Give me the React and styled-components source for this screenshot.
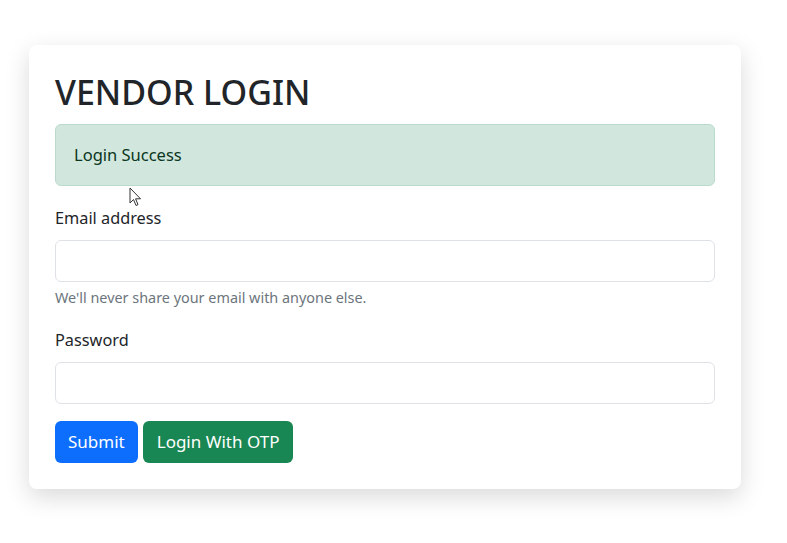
import React from "react";
import styled, { createGlobalStyle } from "styled-components";

const GlobalStyle = createGlobalStyle`
  body {
    margin: 0;
    background: #ffffff;
    font-family: "Noto Sans", "Open Sans", sans-serif;
    color: #212529;
  }
  * {
    box-sizing: border-box;
  }
`;

const Page = styled.main`
  position: relative;
  padding: 45px 0 0 29px;
  min-height: 543px;
`;

const Card = styled.section`
  width: 712px;
  padding: 27px 26px 26px;
  background: #ffffff;
  border-radius: 8px;
  box-shadow: 0 8px 24px rgba(0, 0, 0, 0.15);
`;

const Title = styled.h1`
  margin: 0 0 11px;
  font-size: 34px;
  font-weight: 500;
  line-height: 1.2;
  color: #212529;
`;

const Alert = styled.div`
  height: 62px;
  display: flex;
  align-items: center;
  padding: 0 18px;
  margin-bottom: 19px;
  background: #d1e7dd;
  border: 1px solid #badbcc;
  border-radius: 6px;
  color: #0a3622;
  font-size: 16.5px;
`;

const Field = styled.div`
  margin-bottom: ${(p) => p.$gap || "19px"};
`;

const Label = styled.label`
  display: block;
  font-size: 16.3px;
  line-height: 26px;
  margin-bottom: 9px;
`;

const Input = styled.input`
  display: block;
  width: 100%;
  height: 42px;
  padding: 6px 13px;
  border: 1px solid #dee2e6;
  border-radius: 6px;
  font: inherit;
  background: #fff;
  outline: none;
`;

const Help = styled.div`
  margin-top: 5px;
  font-size: 14.4px;
  line-height: 21px;
  color: #6c757d;
`;

const Actions = styled.div`
  display: flex;
  gap: 5px;
`;

const Button = styled.button`
  height: 42px;
  padding: 0 ${(p) => p.$pad || "14px"};
  border: none;
  border-radius: 6px;
  font-family: inherit;
  font-size: 17px;
  color: #ffffff;
  background: ${(p) => (p.$variant === "success" ? "#198754" : "#0d6efd")};
  cursor: pointer;
`;

const Cursor = styled.svg`
  position: absolute;
  left: 129px;
  top: 187px;
  pointer-events: none;
`;

export default function App() {
  return (
    <>
      <GlobalStyle />
      <Page>
        <Card>
          <Title>VENDOR LOGIN</Title>
          <Alert>Login Success</Alert>
          <Field>
            <Label htmlFor="email">Email address</Label>
            <Input id="email" type="email" />
            <Help>We'll never share your email with anyone else.</Help>
          </Field>
          <Field $gap="17px">
            <Label htmlFor="password">Password</Label>
            <Input id="password" type="password" />
          </Field>
          <Actions>
            <Button $pad="13px">Submit</Button>
            <Button $variant="success">Login With OTP</Button>
          </Actions>
        </Card>
        <Cursor width="13" height="20" viewBox="0 0 13 20">
          <path
            d="M1 1 L1 16 L4.5 12.5 L7 18.5 L9 17.6 L6.6 11.8 L11.5 11.8 Z"
            fill="#ffffff"
            stroke="#333"
            strokeWidth="1"
            strokeLinejoin="round"
          />
        </Cursor>
      </Page>
    </>
  );
}
